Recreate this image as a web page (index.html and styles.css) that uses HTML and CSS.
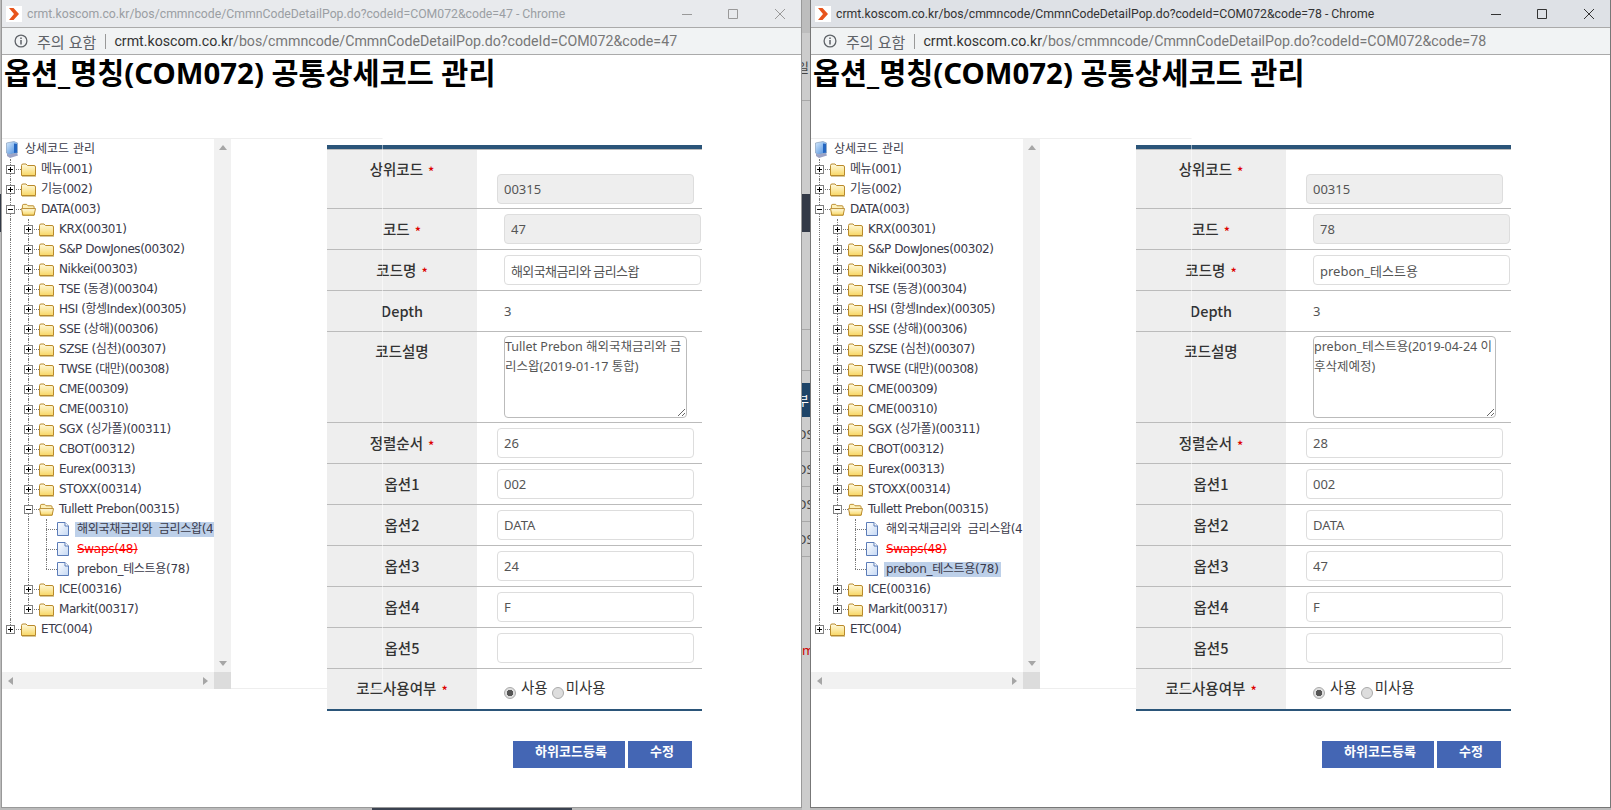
FILE: index.html
```html
<!DOCTYPE html>
<html lang="ko">
<head>
  <meta charset="UTF-8" />
  <title>공통상세코드 관리</title>
  <link rel="stylesheet" href="styles.css">
</head>
<body>
  <svg class="defs" width="0" height="0">
    <defs>
      <linearGradient id="fold" x1="0" y1="0" x2="0" y2="1">
        <stop offset="0" stop-color="#fffbe2"/>
        <stop offset="1" stop-color="#f8d765"/>
      </linearGradient>
      <linearGradient id="page" x1="0" y1="0" x2="1" y2="1">
        <stop offset="0" stop-color="#ffffff"/>
        <stop offset="1" stop-color="#c4d8f4"/>
      </linearGradient>
      <linearGradient id="screen" x1="0" y1="0" x2="1" y2="1">
        <stop offset="0" stop-color="#d9ecfd"/>
        <stop offset="1" stop-color="#3f86dc"/>
      </linearGradient>
      <symbol id="folder" viewBox="0 0 15 15">
        <path d="M.5 3.500Q.5 2 2 2H5L6.500 3.500H13Q14.500 3.500 14.500 5V13.500H.5Z" fill="url(#fold)" stroke="#b98a2c"/>
        <path d="M1 14.500H15" stroke="#d5c79c"/>
      </symbol>
      <symbol id="folder-open" viewBox="0 0 16 15">
        <path d="M1.500 3.500Q1.500 2 3 2H6L7.500 3.500H13Q14 3.500 14 5V13.500H1.500Z" fill="#fdf0b8" stroke="#b98a2c"/>
        <path d="M.5 6.500H15.500L14 13.500H2Z" fill="url(#fold)" stroke="#b98a2c"/>
      </symbol>
      <symbol id="file" viewBox="0 0 12 14">
        <path d="M.5 .5H8L11.500 4V13.500H.5Z" fill="url(#page)" stroke="#5b7cb8"/>
        <path d="M8 .5V4H11.500" fill="#fff" stroke="#5b7cb8"/>
      </symbol>
      <symbol id="root" viewBox="0 0 12 17">
        <path d="M.5 2 8 .5 11.500 2V12L3 13.500 .5 12Z" fill="url(#screen)" stroke="#8aa0bd" stroke-width=".7"/>
        <path d="M1 12.500 3 13.500 11 12 12 14.500 4 17 1 15Z" fill="#9ba3c6"/>
        <path d="M8 2.500 11 3V11.500L8 12Z" fill="#2466c0"/>
      </symbol>
    </defs>
  </svg>

  <div class="desktop">
    <div class="edge"><div class="edge-dark"></div></div>

    <div class="col">
      <div class="window inactive">
        <div class="titlebar">
          <span class="favicon"><svg viewBox="0 0 16 16"><path d="M3 2H7.500L13 8 7.500 14H3L8 8Z" fill="#e8541c"/></svg></span>
          <span class="title-text">crmt.koscom.co.kr/bos/cmmncode/CmmnCodeDetailPop.do?codeId=COM072&amp;code=47 - Chrome</span>
          <span class="win-btns">
            <svg class="w-min" viewBox="0 0 10 12"><path d="M0 6.500H10" stroke="currentColor"/></svg>
            <svg viewBox="0 0 12 12"><path d="M1.500 1.500H10.500V10.500H1.500Z" fill="none" stroke="currentColor"/></svg>
            <svg viewBox="0 0 12 12"><path d="M1 1 11 11M11 1 1 11" stroke="currentColor"/></svg>
          </span>
        </div>
        <div class="urlbar">
          <svg class="info" viewBox="0 0 14 14"><circle cx="7" cy="7" r="5.900" fill="none" stroke="#5f6368" stroke-width="1.300"/><path d="M7 6V10.500M7 3.500V5" stroke="#5f6368" stroke-width="1.500"/></svg>
          <span class="warn">주의 요함</span>
          <span class="url-sep"></span>
          <span class="url"><span class="url-host">crmt.koscom.co.kr</span>/bos/cmmncode/CmmnCodeDetailPop.do?codeId=COM072&amp;code=47</span>
        </div>
        <h1>옵션_명칭(COM072) 공통상세코드 관리</h1>
        <div class="content">
          <div class="form">
            <table class="detail">
              <tr class="row-first"><th>상위코드 <em>*</em></th><td class="pad-a"><input class="ro" readonly value="00315"></td></tr>
              <tr><th>코드 <em>*</em></th><td class="pad-b"><input class="ro" readonly value="47"></td></tr>
              <tr><th>코드명 <em>*</em></th><td class="pad-b"><input class="ko" value="해외국채금리와 금리스왑"></td></tr>
              <tr><th>Depth</th><td class="pad-b plain">3</td></tr>
              <tr class="row-area"><th>코드설명</th><td class="pad-b"><textarea>Tullet Prebon 해외국채금리와 금리스왑(2019-01-17 통합)</textarea></td></tr>
              <tr><th>정렬순서 <em>*</em></th><td class="pad-a"><input value="26"></td></tr>
              <tr><th>옵션1</th><td class="pad-a"><input value="002"></td></tr>
              <tr><th>옵션2</th><td class="pad-a"><input value="DATA"></td></tr>
              <tr><th>옵션3</th><td class="pad-a"><input value="24"></td></tr>
              <tr><th>옵션4</th><td class="pad-a"><input value="F"></td></tr>
              <tr><th>옵션5</th><td class="pad-a"><input value=""></td></tr>
              <tr class="row-last"><th>코드사용여부 <em>*</em></th><td class="pad-c"><span class="radio on"></span><span class="radio-label">사용</span><span class="radio"></span><span class="radio-label tight">미사용</span></td></tr>
            </table>
            <div class="actions"><button class="btn-wide">하위코드등록</button><button class="btn-narrow">수정</button></div>
          </div>
          <div class="frame">
            <div class="tree">
              <div class="tree-body">
                <div class="node"><svg class="ico-root"><use href="#root"/></svg><span class="label root-label">상세코드 관리</span></div>
                <div class="node"><i class="tog"><b class="box"></b></i><svg class="ico-folder"><use href="#folder"/></svg><span class="label">메뉴(001)</span></div>
                <div class="node"><i class="tog"><b class="box"></b></i><svg class="ico-folder"><use href="#folder"/></svg><span class="label">기능(002)</span></div>
                <div class="node"><i class="tog"><b class="box minus"></b></i><svg class="ico-folder"><use href="#folder-open"/></svg><span class="label">DATA(003)</span></div>
                <div class="node"><i class="ind"></i><i class="tog"><b class="box"></b></i><svg class="ico-folder"><use href="#folder"/></svg><span class="label">KRX(00301)</span></div>
                <div class="node"><i class="ind"></i><i class="tog"><b class="box"></b></i><svg class="ico-folder"><use href="#folder"/></svg><span class="label">S&amp;P DowJones(00302)</span></div>
                <div class="node"><i class="ind"></i><i class="tog"><b class="box"></b></i><svg class="ico-folder"><use href="#folder"/></svg><span class="label">Nikkei(00303)</span></div>
                <div class="node"><i class="ind"></i><i class="tog"><b class="box"></b></i><svg class="ico-folder"><use href="#folder"/></svg><span class="label">TSE (동경)(00304)</span></div>
                <div class="node"><i class="ind"></i><i class="tog"><b class="box"></b></i><svg class="ico-folder"><use href="#folder"/></svg><span class="label">HSI (항셍Index)(00305)</span></div>
                <div class="node"><i class="ind"></i><i class="tog"><b class="box"></b></i><svg class="ico-folder"><use href="#folder"/></svg><span class="label">SSE (상해)(00306)</span></div>
                <div class="node"><i class="ind"></i><i class="tog"><b class="box"></b></i><svg class="ico-folder"><use href="#folder"/></svg><span class="label">SZSE (심천)(00307)</span></div>
                <div class="node"><i class="ind"></i><i class="tog"><b class="box"></b></i><svg class="ico-folder"><use href="#folder"/></svg><span class="label">TWSE (대만)(00308)</span></div>
                <div class="node"><i class="ind"></i><i class="tog"><b class="box"></b></i><svg class="ico-folder"><use href="#folder"/></svg><span class="label">CME(00309)</span></div>
                <div class="node"><i class="ind"></i><i class="tog"><b class="box"></b></i><svg class="ico-folder"><use href="#folder"/></svg><span class="label">CME(00310)</span></div>
                <div class="node"><i class="ind"></i><i class="tog"><b class="box"></b></i><svg class="ico-folder"><use href="#folder"/></svg><span class="label">SGX (싱가폴)(00311)</span></div>
                <div class="node"><i class="ind"></i><i class="tog"><b class="box"></b></i><svg class="ico-folder"><use href="#folder"/></svg><span class="label">CBOT(00312)</span></div>
                <div class="node"><i class="ind"></i><i class="tog"><b class="box"></b></i><svg class="ico-folder"><use href="#folder"/></svg><span class="label">Eurex(00313)</span></div>
                <div class="node"><i class="ind"></i><i class="tog"><b class="box"></b></i><svg class="ico-folder"><use href="#folder"/></svg><span class="label">STOXX(00314)</span></div>
                <div class="node"><i class="ind"></i><i class="tog"><b class="box minus"></b></i><svg class="ico-folder"><use href="#folder-open"/></svg><span class="label">Tullett Prebon(00315)</span></div>
                <div class="node"><i class="ind"></i><i class="ind"></i><i class="tee"></i><svg class="ico-file"><use href="#file"/></svg><span class="label leaf selected">해외국채금리와 금리스왑(47)</span></div>
                <div class="node"><i class="ind"></i><i class="ind"></i><i class="tee"></i><svg class="ico-file"><use href="#file"/></svg><span class="label leaf deleted">Swaps(48)</span></div>
                <div class="node"><i class="ind"></i><i class="ind"></i><i class="tee end"></i><svg class="ico-file"><use href="#file"/></svg><span class="label leaf">prebon_테스트용(78)</span></div>
                <div class="node"><i class="ind"></i><i class="tog"><b class="box"></b></i><svg class="ico-folder"><use href="#folder"/></svg><span class="label">ICE(00316)</span></div>
                <div class="node"><i class="ind"></i><i class="tog end"><b class="box"></b></i><svg class="ico-folder"><use href="#folder"/></svg><span class="label">Markit(00317)</span></div>
                <div class="node"><i class="tog end"><b class="box"></b></i><svg class="ico-folder"><use href="#folder"/></svg><span class="label">ETC(004)</span></div>
              </div>
              <div class="sb-v"><i class="arr up"></i><i class="arr down"></i></div>
              <div class="sb-h"><i class="arr left"></i><i class="arr right"></i></div>
              <div class="sb-corner"></div>
            </div>
          </div>
        </div>
      </div>
      <div class="under"><div class="under-tab"></div></div>
    </div>

    <div class="strip">
      <div class="band-chrome"></div>
      <div class="line frag">일</div>
      <div></div>
      <div class="band-dark"></div>
      <div class="line"></div>
      <div class="line"></div>
      <div></div>
      <div class="band-navy frag">부</div>
      <div class="line frag">DS</div>
      <div class="line frag">DS</div>
      <div class="line frag">DS</div>
      <div class="line frag">DS</div>
      <div></div>
      <div class="frag red">mn</div>
      <div></div>
    </div>

    <div class="col">
      <div class="window">
        <div class="titlebar">
          <span class="favicon"><svg viewBox="0 0 16 16"><path d="M3 2H7.500L13 8 7.500 14H3L8 8Z" fill="#e8541c"/></svg></span>
          <span class="title-text">crmt.koscom.co.kr/bos/cmmncode/CmmnCodeDetailPop.do?codeId=COM072&amp;code=78 - Chrome</span>
          <span class="win-btns">
            <svg class="w-min" viewBox="0 0 10 12"><path d="M0 6.500H10" stroke="currentColor"/></svg>
            <svg viewBox="0 0 12 12"><path d="M1.500 1.500H10.500V10.500H1.500Z" fill="none" stroke="currentColor"/></svg>
            <svg viewBox="0 0 12 12"><path d="M1 1 11 11M11 1 1 11" stroke="currentColor"/></svg>
          </span>
        </div>
        <div class="urlbar">
          <svg class="info" viewBox="0 0 14 14"><circle cx="7" cy="7" r="5.900" fill="none" stroke="#5f6368" stroke-width="1.300"/><path d="M7 6V10.500M7 3.500V5" stroke="#5f6368" stroke-width="1.500"/></svg>
          <span class="warn">주의 요함</span>
          <span class="url-sep"></span>
          <span class="url"><span class="url-host">crmt.koscom.co.kr</span>/bos/cmmncode/CmmnCodeDetailPop.do?codeId=COM072&amp;code=78</span>
        </div>
        <h1>옵션_명칭(COM072) 공통상세코드 관리</h1>
        <div class="content">
          <div class="form">
            <table class="detail">
              <tr class="row-first"><th>상위코드 <em>*</em></th><td class="pad-a"><input class="ro" readonly value="00315"></td></tr>
              <tr><th>코드 <em>*</em></th><td class="pad-b"><input class="ro" readonly value="78"></td></tr>
              <tr><th>코드명 <em>*</em></th><td class="pad-b"><input value="prebon_테스트용"></td></tr>
              <tr><th>Depth</th><td class="pad-b plain">3</td></tr>
              <tr class="row-area"><th>코드설명</th><td class="pad-b"><textarea>prebon_테스트용(2019-04-24 이후삭제예정)</textarea></td></tr>
              <tr><th>정렬순서 <em>*</em></th><td class="pad-a"><input value="28"></td></tr>
              <tr><th>옵션1</th><td class="pad-a"><input value="002"></td></tr>
              <tr><th>옵션2</th><td class="pad-a"><input value="DATA"></td></tr>
              <tr><th>옵션3</th><td class="pad-a"><input value="47"></td></tr>
              <tr><th>옵션4</th><td class="pad-a"><input value="F"></td></tr>
              <tr><th>옵션5</th><td class="pad-a"><input value=""></td></tr>
              <tr class="row-last"><th>코드사용여부 <em>*</em></th><td class="pad-c"><span class="radio on"></span><span class="radio-label">사용</span><span class="radio"></span><span class="radio-label tight">미사용</span></td></tr>
            </table>
            <div class="actions"><button class="btn-wide">하위코드등록</button><button class="btn-narrow">수정</button></div>
          </div>
          <div class="frame">
            <div class="tree">
              <div class="tree-body">
                <div class="node"><svg class="ico-root"><use href="#root"/></svg><span class="label root-label">상세코드 관리</span></div>
                <div class="node"><i class="tog"><b class="box"></b></i><svg class="ico-folder"><use href="#folder"/></svg><span class="label">메뉴(001)</span></div>
                <div class="node"><i class="tog"><b class="box"></b></i><svg class="ico-folder"><use href="#folder"/></svg><span class="label">기능(002)</span></div>
                <div class="node"><i class="tog"><b class="box minus"></b></i><svg class="ico-folder"><use href="#folder-open"/></svg><span class="label">DATA(003)</span></div>
                <div class="node"><i class="ind"></i><i class="tog"><b class="box"></b></i><svg class="ico-folder"><use href="#folder"/></svg><span class="label">KRX(00301)</span></div>
                <div class="node"><i class="ind"></i><i class="tog"><b class="box"></b></i><svg class="ico-folder"><use href="#folder"/></svg><span class="label">S&amp;P DowJones(00302)</span></div>
                <div class="node"><i class="ind"></i><i class="tog"><b class="box"></b></i><svg class="ico-folder"><use href="#folder"/></svg><span class="label">Nikkei(00303)</span></div>
                <div class="node"><i class="ind"></i><i class="tog"><b class="box"></b></i><svg class="ico-folder"><use href="#folder"/></svg><span class="label">TSE (동경)(00304)</span></div>
                <div class="node"><i class="ind"></i><i class="tog"><b class="box"></b></i><svg class="ico-folder"><use href="#folder"/></svg><span class="label">HSI (항셍Index)(00305)</span></div>
                <div class="node"><i class="ind"></i><i class="tog"><b class="box"></b></i><svg class="ico-folder"><use href="#folder"/></svg><span class="label">SSE (상해)(00306)</span></div>
                <div class="node"><i class="ind"></i><i class="tog"><b class="box"></b></i><svg class="ico-folder"><use href="#folder"/></svg><span class="label">SZSE (심천)(00307)</span></div>
                <div class="node"><i class="ind"></i><i class="tog"><b class="box"></b></i><svg class="ico-folder"><use href="#folder"/></svg><span class="label">TWSE (대만)(00308)</span></div>
                <div class="node"><i class="ind"></i><i class="tog"><b class="box"></b></i><svg class="ico-folder"><use href="#folder"/></svg><span class="label">CME(00309)</span></div>
                <div class="node"><i class="ind"></i><i class="tog"><b class="box"></b></i><svg class="ico-folder"><use href="#folder"/></svg><span class="label">CME(00310)</span></div>
                <div class="node"><i class="ind"></i><i class="tog"><b class="box"></b></i><svg class="ico-folder"><use href="#folder"/></svg><span class="label">SGX (싱가폴)(00311)</span></div>
                <div class="node"><i class="ind"></i><i class="tog"><b class="box"></b></i><svg class="ico-folder"><use href="#folder"/></svg><span class="label">CBOT(00312)</span></div>
                <div class="node"><i class="ind"></i><i class="tog"><b class="box"></b></i><svg class="ico-folder"><use href="#folder"/></svg><span class="label">Eurex(00313)</span></div>
                <div class="node"><i class="ind"></i><i class="tog"><b class="box"></b></i><svg class="ico-folder"><use href="#folder"/></svg><span class="label">STOXX(00314)</span></div>
                <div class="node"><i class="ind"></i><i class="tog"><b class="box minus"></b></i><svg class="ico-folder"><use href="#folder-open"/></svg><span class="label">Tullett Prebon(00315)</span></div>
                <div class="node"><i class="ind"></i><i class="ind"></i><i class="tee"></i><svg class="ico-file"><use href="#file"/></svg><span class="label leaf">해외국채금리와 금리스왑(47)</span></div>
                <div class="node"><i class="ind"></i><i class="ind"></i><i class="tee"></i><svg class="ico-file"><use href="#file"/></svg><span class="label leaf deleted">Swaps(48)</span></div>
                <div class="node"><i class="ind"></i><i class="ind"></i><i class="tee end"></i><svg class="ico-file"><use href="#file"/></svg><span class="label leaf selected">prebon_테스트용(78)</span></div>
                <div class="node"><i class="ind"></i><i class="tog"><b class="box"></b></i><svg class="ico-folder"><use href="#folder"/></svg><span class="label">ICE(00316)</span></div>
                <div class="node"><i class="ind"></i><i class="tog end"><b class="box"></b></i><svg class="ico-folder"><use href="#folder"/></svg><span class="label">Markit(00317)</span></div>
                <div class="node"><i class="tog end"><b class="box"></b></i><svg class="ico-folder"><use href="#folder"/></svg><span class="label">ETC(004)</span></div>
              </div>
              <div class="sb-v"><i class="arr up"></i><i class="arr down"></i></div>
              <div class="sb-h"><i class="arr left"></i><i class="arr right"></i></div>
              <div class="sb-corner"></div>
            </div>
          </div>
        </div>
      </div>
      <div class="under"></div>
    </div>
  </div>
</body>
</html>
```

FILE: styles.css
```css
* { box-sizing: border-box; }
html, body { margin: 0; height: 100%; overflow: hidden; }
body { font-family: "Noto Sans", "Noto Sans CJK KR", sans-serif; color: #333; background: #ccc; }
.defs { position: absolute; }

.desktop { display: flex; height: 810px; }
.edge { width: 1px; background: #bbb; padding-top: 194px; }
.edge-dark { height: 38px; background: #333a47; }
.col { width: 801px; display: flex; flex-direction: column; }
.under { height: 2px; background: #bbb; }
.under-tab { width: 200px; height: 2px; margin-left: 371px; background: #3a4250; }

/* what shows of the page behind the two popups */
.strip {
  width: 8px; background: #ccc; overflow: hidden;
  display: grid;
  grid-template-rows: 33px 68px 93px 38px 98px 41px 12px 34px 35px 35px 35px 35px 83px 20px 1fr;
}
.strip > div { min-width: 0; overflow: hidden; }
.band-chrome { background: #bdbdbd; }
.band-dark { background: #333a47; }
.band-navy { background: #1e4468; color: #fff !important; }
.line { border-bottom: 1px solid #a8a8a8; }
.frag {
  font: 13px/16px "Noto Sans", "Noto Sans CJK KR", sans-serif; color: #444;
  white-space: nowrap; text-indent: -5px; display: flex; align-items: center;
}
.frag.red { color: #cc0000; text-indent: 0; }

.window { flex: 1; min-height: 0; background: #fff; border: 1px solid #777; border-top: 0; overflow: hidden; }
.window.inactive { border-color: #999; }

.titlebar {
  height: 28px; background: #dee1e6; border-bottom: 1px solid #aaa;
  display: flex; align-items: center; padding-left: 4px; color: #333;
}
.inactive .titlebar { background: #e8eaed; color: #9a9ea3; }
.favicon { width: 16px; height: 16px; background: #fff; flex: none; }
.favicon svg { display: block; width: 16px; height: 16px; }
.title-text { margin-left: 5px; font: 12.25px Roboto, sans-serif; white-space: nowrap; flex: 1; }
.win-btns { display: flex; align-items: center; gap: 35px; padding-right: 15px; color: #333; }
.inactive .win-btns { color: #999; }
.win-btns svg { display: block; width: 12px; height: 12px; }
.win-btns svg.w-min { width: 10px; }

.urlbar {
  height: 27px; background: #f1f3f4; border-bottom: 1px solid #aaa;
  display: flex; align-items: center; padding-left: 12px;
}
.info { width: 14px; height: 14px; flex: none; }
.warn { margin-left: 9px; font: 15px "Noto Sans CJK KR", sans-serif; color: #5f6368; white-space: nowrap; }
.url-sep { width: 1px; height: 15px; background: #999; margin: 0 8px 0 9px; }
.url { font: 14.2px Roboto, sans-serif; color: #777; white-space: nowrap; }
.url-host { color: #333; }

h1 {
  margin: 0 0 47px; padding-left: 2px; height: 36px;
  font-size: 29.4px; line-height: 36px; font-weight: 700; color: #000; white-space: nowrap;
}

.content { display: grid; }
.content > * { grid-area: 1 / 1; }

.frame {
  width: 381px; height: 551px; border: 1px solid #eee; border-left: 0;
  border-right-color: rgba(255, 255, 255, .5);
  pointer-events: none;
}
.tree {
  width: 229px; height: 550px; display: grid;
  grid-template-columns: 212px 17px; grid-template-rows: 533px 17px;
  background: #fff;
}
.tree-body { overflow: hidden; font: 12px "DejaVu Sans", "Noto Sans CJK KR", sans-serif; color: #3a3a4a; }
.node { height: 20px; display: flex; align-items: center; white-space: nowrap; }
.label { margin-left: 5px; padding-top: 1px; line-height: 17px; letter-spacing: -.45px; }
.label.root-label { letter-spacing: 0; }
.label.leaf { margin-left: 6px; padding: 0 2px; height: 15px; line-height: 15px; letter-spacing: -.3px; word-spacing: 3px; }
.label.selected { background: #bdd0e9; }
.label.deleted { color: #f00; text-decoration: line-through; }

.ico-root { width: 12px; height: 17px; margin-left: 4px; margin-right: 2px; flex: none; }
.ico-folder { width: 15px; height: 15px; flex: none; margin-top: 1px; }
.ico-file { width: 12px; height: 14px; flex: none; }

.ind, .tog, .tee { position: relative; height: 20px; flex: none; display: block; }
.ind { width: 18px; }
.tog { width: 19px; }
.tee { width: 19px; }
.ind::before, .tog::before, .tee::before {
  content: ""; position: absolute; left: 8px; top: 0; bottom: 0;
  border-left: 1px dotted #777;
}
.tog.end::before, .tee.end::before { bottom: 10px; }
.tog::after, .tee::after {
  content: ""; position: absolute; left: 8px; right: 0; top: 10px;
  border-top: 1px dotted #777;
}
.box {
  position: absolute; z-index: 1; left: 4px; top: 6px; width: 9px; height: 9px;
  border: 1px solid #808080;
  background:
    linear-gradient(#000, #000) center / 5px 1px no-repeat,
    linear-gradient(#000, #000) center / 1px 5px no-repeat,
    #fff;
}
.box.minus {
  background: linear-gradient(#000, #000) center / 5px 1px no-repeat, #fff;
}

.sb-v { background: #f1f1f1; display: flex; flex-direction: column; justify-content: space-between; align-items: center; padding: 6px 0; }
.sb-h { background: #f1f1f1; display: flex; justify-content: space-between; align-items: center; padding: 0 6px; }
.sb-corner { background: #dcdcdc; }
.arr { display: block; width: 0; height: 0; border-style: solid; border-color: transparent; }
.arr.up { border-width: 0 4px 5px; border-bottom-color: #a6a6a6; }
.arr.down { border-width: 5px 4px 0; border-top-color: #a6a6a6; }
.arr.left { border-width: 4px 5px 4px 0; border-right-color: #a6a6a6; }
.arr.right { border-width: 4px 0 4px 5px; border-left-color: #a6a6a6; }

.form { margin-left: 325px; margin-top: 7px; width: 375px; }
.detail {
  width: 375px; border-collapse: separate; border-spacing: 0;
  border-top: 4px solid #2b5579; table-layout: fixed;
}
.detail tr:first-child th, .detail tr:first-child td { border-top: 1px solid #bbb; }
.detail th, .detail td { height: 41px; padding: 0; border-bottom: 1px solid #bbb; }
.detail th {
  width: 150px; background: #eee; text-align: center; padding-bottom: 2px;
  font: 500 14.5px "Noto Sans CJK KR", sans-serif; color: #333;
}
.detail th em { color: #d00; font-style: normal; font-size: 13px; margin-left: 1px; position: relative; top: 2px; }
.row-first th, .row-first td { height: 60px !important; }
.row-first th { vertical-align: top; padding-top: 8px; }
.row-first td { vertical-align: bottom; padding-bottom: 4px; }
.row-area th, .row-area td { height: 91px !important; }
.row-area th { vertical-align: top; padding-top: 8px; }
.row-last th, .row-last td { border-bottom: 2px solid #2b5579; height: 42px; }
.row-last th { padding-bottom: 4px; }

.pad-a { padding-left: 20px !important; }
.pad-b { padding-left: 27px !important; }
.pad-c { padding-left: 27px !important; font-size: 14.5px; }
.plain { font-size: 13px; color: #555; }

input, textarea {
  font: 13px "Noto Sans", "Noto Sans CJK KR", sans-serif; color: #555;
  border-radius: 4px; background: #fff; outline: none; display: block;
}
input { width: 197px; height: 30px; border: 1px solid #ddd; padding: 0 6px; }
input.ro { background: #eee; }
input.ko { letter-spacing: -.6px; }
textarea {
  width: 183px; height: 82px; border: 1px solid #bbb; padding: 0;
  font-size: 12.5px; line-height: 20px; word-break: break-all;
}

.radio {
  display: inline-block; width: 12px; height: 12px; border-radius: 50%;
  border: 1px solid #aaa; background: #ddd; vertical-align: -3px;
}
.radio.on { background: radial-gradient(circle, #555 0 3px, #ddd 3.5px); }
.radio-label { margin: 0 4px 0 5px; position: relative; top: -3px; }
.radio-label.tight { margin-left: 2px; }

.actions { display: flex; justify-content: flex-end; gap: 3px; margin-top: 30px; padding-right: 10px; }
.actions button {
  height: 27px; border: 0; background: #4466b4; color: #fff;
  font: 700 13px "Noto Sans CJK KR", sans-serif; padding: 0 0 8px 4px;
}
.btn-wide { width: 112px; }
.btn-narrow { width: 64px; }
```
